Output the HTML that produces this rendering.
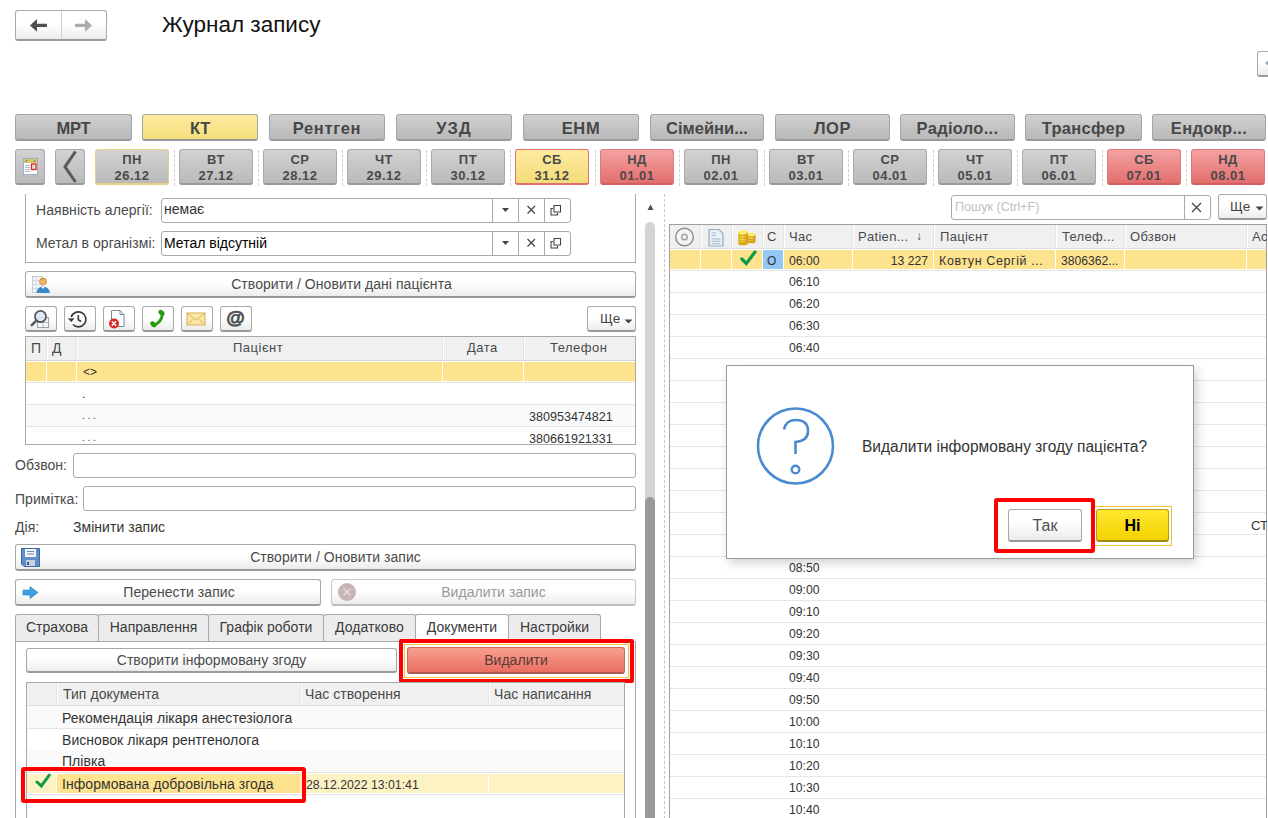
<!DOCTYPE html><html><head><meta charset="utf-8"><style>
*{box-sizing:border-box}
html,body{margin:0;padding:0;background:#fff;overflow:hidden}
body{width:1268px;height:818px;position:relative;font-family:"Liberation Sans",sans-serif;color:#333}
.f{font-size:14px;letter-spacing:0.05px;color:#4a4a4a}
.btn{position:absolute;border:1px solid #a9a9a9;border-bottom:2px solid #9a9a9a;border-radius:3px;background:linear-gradient(#fff,#fff 45%,#ececec);}
.cat{position:absolute;height:27px;top:114px;border:1px solid #a4a4a4;border-bottom:2px solid #999;border-radius:3px;background:linear-gradient(#d0d0d0,#b9b9b9);font-weight:bold;font-size:16.5px;color:#474747;text-align:center;line-height:26px;overflow:hidden;white-space:nowrap}
.day{position:absolute;top:149px;height:36px;border:1px solid #a9a9a9;border-bottom:2px solid #999;border-radius:3px;background:linear-gradient(#d2d2d2,#bababa);font-weight:bold;font-size:13px;letter-spacing:0.5px;color:#4a4a4a;text-align:center;line-height:16px;padding-top:1.5px;white-space:nowrap}
.sep{position:absolute;width:0;border-left:1px dashed #cfcfcf}
.inp{position:absolute;border:1px solid #a9a9a9;border-radius:3px;background:#fff}
.hdr{position:absolute;background:#f0f0f0;font-size:14px;letter-spacing:0.05px;color:#4a4a4a;line-height:22px;white-space:nowrap;overflow:hidden}
.rt{position:absolute;font-size:12px;color:#333;white-space:nowrap;line-height:22px}
</style></head><body>
<div class="btn" style="left:15px;top:10px;width:92px;height:31px;"></div>
<div style="position:absolute;left:61px;top:11px;width:1px;height:28px;background:#cfcfcf"></div>
<svg style="position:absolute;left:0;top:0" width="120" height="45"><path d="M30 25.4 L37 19 L37 23.8 L47 23.8 L47 27 L37 27 L37 31.8 Z" fill="#505050"/><path d="M92 25.4 L85 19 L85 23.8 L75 23.8 L75 27 L85 27 L85 31.8 Z" fill="#ababab"/></svg>
<div style="position:absolute;left:162px;top:12px;white-space:nowrap;font-size:22.5px;color:#111;line-height:26px">Журнал запису</div>
<div class="btn" style="left:1257px;top:51px;width:20px;height:26px;"></div>
<svg style="position:absolute;left:1265px;top:57px" width="8" height="12"><path d="M0 6 L6 1 L6 11 Z" fill="#9aaab8"/></svg>
<div class="cat" style="left:15px;width:117px;letter-spacing:-0.25px;">МРТ</div>
<div class="cat" style="left:142px;width:116px;letter-spacing:-0.4px;background:linear-gradient(#fdeb9f,#f5df7d);">КТ</div>
<div class="cat" style="left:269px;width:116px;letter-spacing:0.65px;">Рентген</div>
<div class="cat" style="left:396px;width:116px;letter-spacing:1.0px;">УЗД</div>
<div class="cat" style="left:523px;width:116px;letter-spacing:0.6px;">ЕНМ</div>
<div class="cat" style="left:650px;width:114px;letter-spacing:0px;">Сімейни...</div>
<div class="cat" style="left:775px;width:115px;letter-spacing:0.5px;">ЛОР</div>
<div class="cat" style="left:900px;width:115px;letter-spacing:0.3px;">Радіоло...</div>
<div class="cat" style="left:1025px;width:117px;letter-spacing:0.3px;">Трансфер</div>
<div class="cat" style="left:1152px;width:114px;letter-spacing:0.3px;">Ендокр...</div>
<div class="day" style="left:15px;width:30px;"></div>
<svg style="position:absolute;left:23px;top:158px" width="16" height="18"><rect x="0.5" y="0.5" width="14" height="16" fill="#fff" stroke="#a4acc4"/><rect x="1" y="1" width="13" height="4" fill="#d6c672"/><rect x="2.5" y="2" width="2" height="2" fill="#a09850"/><rect x="10.5" y="2" width="2" height="2" fill="#a09850"/><rect x="2" y="7" width="5" height="1" fill="#b0b8c8"/><rect x="2" y="9" width="5" height="1" fill="#b0b8c8"/><rect x="2" y="11" width="5" height="1" fill="#b0b8c8"/><rect x="2" y="13" width="5" height="1" fill="#b0b8c8"/><rect x="8.5" y="6" width="4.5" height="5.5" fill="#d9f0d0" stroke="#e02020" stroke-width="1.3"/></svg>
<div class="day" style="left:55px;width:30px;"></div>
<svg style="position:absolute;left:55px;top:149px" width="30" height="36"><path d="M20.5 2.5 L10 17.8 L20.5 33" fill="none" stroke="#5a5a5a" stroke-width="3"/></svg>
<div class="day" style="left:95px;width:74px;border-color:#e8d080;">ПН<br>26.12</div>
<div class="sep" style="left:174px;top:150px;height:36px"></div>
<div class="day" style="left:179px;width:74px;">ВТ<br>27.12</div>
<div class="sep" style="left:258px;top:150px;height:36px"></div>
<div class="day" style="left:263px;width:74px;">СР<br>28.12</div>
<div class="sep" style="left:342px;top:150px;height:36px"></div>
<div class="day" style="left:347px;width:74px;">ЧТ<br>29.12</div>
<div class="sep" style="left:426px;top:150px;height:36px"></div>
<div class="day" style="left:431px;width:74px;">ПТ<br>30.12</div>
<div class="sep" style="left:510px;top:150px;height:36px"></div>
<div class="day" style="left:515px;width:74px;background:linear-gradient(#fdeb9f,#f3dc78);border-color:#e07070;">СБ<br>31.12</div>
<div class="sep" style="left:595px;top:150px;height:36px"></div>
<div class="day" style="left:600px;width:74px;background:linear-gradient(#f4a2a2,#e46e6e);border-color:#e07878;border-bottom-color:#d06060;">НД<br>01.01</div>
<div class="sep" style="left:679px;top:150px;height:36px"></div>
<div class="day" style="left:684px;width:74px;">ПН<br>02.01</div>
<div class="sep" style="left:764px;top:150px;height:36px"></div>
<div class="day" style="left:769px;width:74px;">ВТ<br>03.01</div>
<div class="sep" style="left:848px;top:150px;height:36px"></div>
<div class="day" style="left:853px;width:74px;">СР<br>04.01</div>
<div class="sep" style="left:933px;top:150px;height:36px"></div>
<div class="day" style="left:938px;width:74px;">ЧТ<br>05.01</div>
<div class="sep" style="left:1017px;top:150px;height:36px"></div>
<div class="day" style="left:1022px;width:74px;">ПТ<br>06.01</div>
<div class="sep" style="left:1102px;top:150px;height:36px"></div>
<div class="day" style="left:1107px;width:74px;background:linear-gradient(#f4a2a2,#e46e6e);border-color:#e07878;border-bottom-color:#d06060;">СБ<br>07.01</div>
<div class="sep" style="left:1186px;top:150px;height:36px"></div>
<div class="day" style="left:1191px;width:74px;background:linear-gradient(#f4a2a2,#e46e6e);border-color:#e07878;border-bottom-color:#d06060;">НД<br>08.01</div>
<div style="position:absolute;left:25px;top:194px;width:611px;height:69px;border-left:1px solid #a9a9a9;border-right:1px solid #a9a9a9;border-bottom:1px solid #a9a9a9"></div>
<div style="position:absolute;left:36px;top:202px;white-space:nowrap;font-size:14px;letter-spacing:0.05px;color:#4a4a4a;line-height:16px;">Наявність алергії:</div>
<div style="position:absolute;left:36px;top:235px;white-space:nowrap;font-size:14px;letter-spacing:0.05px;color:#4a4a4a;line-height:16px">Метал в організмі:</div>
<div class="inp" style="left:161px;top:198px;width:410px;height:25px"></div>
<div style="position:absolute;left:492px;top:198px;width:1px;height:25px;background:#a9a9a9"></div>
<div style="position:absolute;left:518px;top:198px;width:1px;height:25px;background:#a9a9a9"></div>
<div style="position:absolute;left:544px;top:198px;width:1px;height:25px;background:#a9a9a9"></div>
<div style="position:absolute;left:164px;top:201px;white-space:nowrap;font-size:14px;letter-spacing:0px;color:#333;line-height:16px">немає</div>
<svg style="position:absolute;left:492px;top:198px" width="80" height="24"><path d="M10 10 L17 10 L13.5 14 Z" fill="#444"/><path d="M35.5 8 L43 15.5 M43 8 L35.5 15.5" stroke="#444" stroke-width="1.2"/><path d="M61 10.5 L59 10.5 L59 17 L65.5 17 L65.5 15 M62 7.5 L68.5 7.5 L68.5 14 L62 14 Z" fill="none" stroke="#444" stroke-width="1.1"/></svg>
<div class="inp" style="left:161px;top:231px;width:410px;height:25px"></div>
<div style="position:absolute;left:492px;top:231px;width:1px;height:25px;background:#a9a9a9"></div>
<div style="position:absolute;left:518px;top:231px;width:1px;height:25px;background:#a9a9a9"></div>
<div style="position:absolute;left:544px;top:231px;width:1px;height:25px;background:#a9a9a9"></div>
<div style="position:absolute;left:164px;top:235px;white-space:nowrap;font-size:14px;letter-spacing:0px;color:#000;line-height:16px">Метал відсутній</div>
<svg style="position:absolute;left:492px;top:231px" width="80" height="24"><path d="M10 10 L17 10 L13.5 14 Z" fill="#444"/><path d="M35.5 8 L43 15.5 M43 8 L35.5 15.5" stroke="#444" stroke-width="1.2"/><path d="M61 10.5 L59 10.5 L59 17 L65.5 17 L65.5 15 M62 7.5 L68.5 7.5 L68.5 14 L62 14 Z" fill="none" stroke="#444" stroke-width="1.1"/></svg>
<div class="btn" style="left:25px;top:271px;width:611px;height:27px"></div>
<div style="position:absolute;left:25px;top:276px;white-space:nowrap;font-size:14px;letter-spacing:0.05px;color:#4a4a4a;line-height:16px"><div style="width:611px;text-align:center;padding-left:22px">Створити / Оновити дані пацієнта</div></div>
<svg style="position:absolute;left:32px;top:276px" width="19" height="18"><rect x="0.5" y="0.5" width="10" height="16" fill="#f2f5f8" stroke="#b8c0cc" stroke-width="0.8"/><path d="M0.5 4.5 H10.5 M0.5 8.5 H10.5 M0.5 12.5 H10.5 M4 0.5 V16.5" stroke="#c8d0da" stroke-width="0.7"/><circle cx="11" cy="5.5" r="3.8" fill="#d88a3a"/><circle cx="11" cy="5.8" r="2.9" fill="#f0b068"/><path d="M4.5 17 Q5 10.5 11 10.5 Q17 10.5 18 17 Z" fill="#3a88c4"/><path d="M9 10.8 L11 13 L13 10.8 Z" fill="#fff"/></svg>
<div class="btn" style="left:25px;top:306px;width:32px;height:26px"></div>
<div class="btn" style="left:64px;top:306px;width:32px;height:26px"></div>
<div class="btn" style="left:103px;top:306px;width:32px;height:26px"></div>
<div class="btn" style="left:142px;top:306px;width:32px;height:26px"></div>
<div class="btn" style="left:181px;top:306px;width:32px;height:26px"></div>
<div class="btn" style="left:220px;top:306px;width:32px;height:26px"></div>
<svg style="position:absolute;left:0;top:0" width="300" height="340">
<g transform="translate(25,306)"><rect x="12.5" y="11.5" width="11" height="10" fill="#f6f8fa" stroke="#8a9aaa" stroke-width="0.9"/><path d="M18 12 V21 M13 16.5 H23" stroke="#9aaabb" stroke-width="0.8"/><circle cx="15.5" cy="10.5" r="5.6" fill="#dce8f6" fill-opacity="0.85" stroke="#555" stroke-width="1.7"/><path d="M11.3 14.7 L6 19.8" stroke="#555" stroke-width="2.4"/></g>
<g transform="translate(63,306)"><path d="M8.3 11 A7.5 7.5 0 1 1 10 18.5" fill="none" stroke="#3a3a3a" stroke-width="1.7"/><path d="M4.8 12.5 L8.3 16 L11.6 12.2 Z" fill="#3a3a3a"/><path d="M15.3 9 V13.8 L18 15.5" fill="none" stroke="#3a3a3a" stroke-width="1.6"/></g>
<g transform="translate(102,306)"><path d="M9.5 4.5 H18 L22 8.5 V20.5 H9.5 Z" fill="#fff" stroke="#6a7a8a" stroke-width="0.9"/><path d="M18 4.5 V8.5 H22" fill="none" stroke="#6a7a8a" stroke-width="0.9"/><circle cx="12" cy="17.5" r="5" fill="#dc2828"/><path d="M9.8 15.3 L14.2 19.7 M14.2 15.3 L9.8 19.7" stroke="#fff" stroke-width="1.4"/></g>
<g transform="translate(141,306)"><path d="M21.3 9 Q20.5 15.5 13.5 19.3" fill="none" stroke="#2a9a12" stroke-width="2.8"/><ellipse cx="20.5" cy="6.8" rx="3.4" ry="2.4" transform="rotate(40 20.5 6.8)" fill="#2a9a12"/><ellipse cx="12.3" cy="18.3" rx="3.4" ry="2.4" transform="rotate(40 12.3 18.3)" fill="#2a9a12"/></g>
<g transform="translate(180,306)"><rect x="7" y="7" width="18" height="12" fill="#fbe7a8" stroke="#d4b050" stroke-width="1"/><path d="M7 7 L16 14 L25 7 M7 19 L13 13.5 M25 19 L19 13.5" fill="none" stroke="#d4b050" stroke-width="0.9"/></g>
<g transform="translate(219,306)"><text x="16.5" y="17.8" text-anchor="middle" font-family="Liberation Sans" font-weight="bold" font-size="19" fill="#505050" stroke="#505050" stroke-width="0.7">@</text></g>
</svg>
<div class="btn" style="left:587px;top:306px;width:49px;height:26px"></div>
<div style="position:absolute;left:600px;top:311px;white-space:nowrap;font-size:13.5px;color:#444;line-height:16px">Ще</div>
<svg style="position:absolute;left:623.5px;top:318.5px" width="10" height="6"><path d="M0.5 0.5 L8.5 0.5 L4.5 4.5 Z" fill="#444"/></svg>
<div style="position:absolute;left:25px;top:336px;width:611px;height:109px;border:1px solid #a9a9a9;background:#fff"></div>
<div style="position:absolute;left:26px;top:337px;width:609px;height:24px;background:#f0f0f0;border-bottom:1px solid #d4d4d4"></div>
<div style="position:absolute;left:46px;top:337px;width:2px;height:23px;background:#fff;border-left:1px solid #e4e4e4"></div>
<div style="position:absolute;left:76px;top:337px;width:2px;height:23px;background:#fff;border-left:1px solid #e4e4e4"></div>
<div style="position:absolute;left:442px;top:337px;width:2px;height:23px;background:#fff;border-left:1px solid #e4e4e4"></div>
<div style="position:absolute;left:523px;top:337px;width:2px;height:23px;background:#fff;border-left:1px solid #e4e4e4"></div>
<div style="position:absolute;left:31px;top:340px;white-space:nowrap;font-size:14px;color:#4a4a4a;line-height:16px">П</div>
<div style="position:absolute;left:52px;top:340px;white-space:nowrap;font-size:14px;color:#4a4a4a;line-height:16px">Д</div>
<div style="position:absolute;left:233px;top:340px;white-space:nowrap;font-size:13px;color:#4a4a4a;line-height:16px;letter-spacing:0.5px">Пацієнт</div>
<div style="position:absolute;left:467px;top:340px;white-space:nowrap;font-size:13px;color:#4a4a4a;line-height:16px;letter-spacing:0.5px">Дата</div>
<div style="position:absolute;left:550px;top:340px;white-space:nowrap;font-size:13px;color:#4a4a4a;line-height:16px;letter-spacing:0.5px">Телефон</div>
<div style="position:absolute;left:26px;top:362px;width:609px;height:19px;background:#fde38e"></div>
<div style="position:absolute;left:46px;top:362px;width:1px;height:19px;background:#fff"></div>
<div style="position:absolute;left:76px;top:362px;width:1px;height:19px;background:#fff"></div>
<div style="position:absolute;left:442px;top:362px;width:1px;height:19px;background:#fff"></div>
<div style="position:absolute;left:523px;top:362px;width:1px;height:19px;background:#fff"></div>
<div style="position:absolute;left:83px;top:364px;white-space:nowrap;font-size:12px;color:#333;line-height:16px">&lt;&gt;</div>
<div style="position:absolute;left:26px;top:382px;width:609px;height:1px;background:#e4e4e4"></div>
<div style="position:absolute;left:26px;top:405px;width:609px;height:21px;background:#fafafa"></div>
<div style="position:absolute;left:26px;top:404px;width:609px;height:1px;background:#e4e4e4"></div>
<div style="position:absolute;left:26px;top:426px;width:609px;height:1px;background:#e4e4e4"></div>
<div style="position:absolute;left:82px;top:386px;white-space:nowrap;font-size:12px;color:#333;line-height:16px">.</div>
<div style="position:absolute;left:82px;top:408px;white-space:nowrap;font-size:10px;color:#333;line-height:16px">. . .</div>
<div style="position:absolute;left:82px;top:430px;white-space:nowrap;font-size:10px;color:#333;line-height:16px">. . .</div>
<div style="position:absolute;left:529px;top:408.5px;white-space:nowrap;font-size:13.5px;color:#333;line-height:16px;transform:scaleX(0.93);transform-origin:0 0">380953474821</div>
<div style="position:absolute;left:529px;top:430.5px;white-space:nowrap;font-size:13.5px;color:#333;line-height:16px;transform:scaleX(0.93);transform-origin:0 0">380661921331</div>
<div style="position:absolute;left:15px;top:457px;white-space:nowrap;font-size:14px;letter-spacing:0.05px;color:#4a4a4a;line-height:16px">Обзвон:</div>
<div class="inp" style="left:73px;top:453px;width:563px;height:25px"></div>
<div style="position:absolute;left:15px;top:491px;white-space:nowrap;font-size:14px;letter-spacing:0.05px;color:#4a4a4a;line-height:16px">Примітка:</div>
<div class="inp" style="left:83px;top:486px;width:553px;height:25px"></div>
<div style="position:absolute;left:15px;top:519px;white-space:nowrap;font-size:14px;letter-spacing:0.05px;color:#4a4a4a;line-height:16px">Дія:</div>
<div style="position:absolute;left:73px;top:519px;white-space:nowrap;font-size:14px;letter-spacing:0.05px;color:#333;line-height:16px">Змінити запис</div>
<div class="btn" style="left:15px;top:544px;width:621px;height:27px"></div>
<div style="position:absolute;left:15px;top:549px;white-space:nowrap;font-size:14px;letter-spacing:0.05px;color:#4a4a4a;line-height:16px"><div style="width:621px;text-align:center;padding-left:20px">Створити / Оновити запис</div></div>
<svg style="position:absolute;left:21px;top:548px" width="20" height="19"><path d="M0.5 0.5 H18.5 V18.5 H3 L0.5 16 Z" fill="#5f8ec8" stroke="#3a6aa8"/><rect x="4" y="1" width="11" height="8" fill="#f4f6f8"/><path d="M6 3.5 H13 M6 6 H13" stroke="#6a8ab0"/><rect x="5" y="12" width="9" height="6" fill="#c8d4e0"/><rect x="6" y="14" width="2" height="3" fill="#3a5a88"/></svg>
<div class="btn" style="left:15px;top:579px;width:306px;height:27px"></div>
<div style="position:absolute;left:15px;top:584px;white-space:nowrap;font-size:14px;letter-spacing:0.05px;color:#4a4a4a;line-height:16px"><div style="width:306px;text-align:center;padding-left:22px">Перенести запис</div></div>
<svg style="position:absolute;left:22px;top:586px" width="18" height="14"><path d="M1 4 H8 V0.5 L16 6.5 L8 12.5 V9 H1 Z" fill="#3aa0e0" stroke="#2a80c0" stroke-width="0.6"/></svg>
<div class="btn" style="left:331px;top:579px;width:305px;height:27px;border-color:#c8c8c8;border-bottom-color:#bdbdbd"></div>
<div style="position:absolute;left:331px;top:584px;white-space:nowrap;font-size:14px;letter-spacing:0.05px;color:#999;line-height:16px"><div style="width:305px;text-align:center;padding-left:20px">Видалити запис</div></div>
<svg style="position:absolute;left:337px;top:582px" width="20" height="20"><circle cx="10" cy="10" r="9" fill="#c7b5b5"/><path d="M6.5 6.5 L13.5 13.5 M13.5 6.5 L6.5 13.5" stroke="#e8dede" stroke-width="1.3"/></svg>
<div style="position:absolute;left:15px;top:641px;width:621px;height:200px;border-left:1px solid #a9a9a9;border-right:1px solid #a9a9a9;border-top:1px solid #a9a9a9"></div>
<div style="position:absolute;left:15px;top:614px;width:84px;height:27px;background:#ececec;border:1px solid #a9a9a9;border-radius:3px 3px 0 0;border-bottom:none;font-size:14px;letter-spacing:0.05px;color:#3a3a3a;text-align:center;line-height:25px;white-space:nowrap">Страхова</div>
<div style="position:absolute;left:98px;top:614px;width:111px;height:27px;background:#ececec;border:1px solid #a9a9a9;border-radius:3px 3px 0 0;border-bottom:none;font-size:14px;letter-spacing:0.05px;color:#3a3a3a;text-align:center;line-height:25px;white-space:nowrap">Направлення</div>
<div style="position:absolute;left:208px;top:614px;width:116px;height:27px;background:#ececec;border:1px solid #a9a9a9;border-radius:3px 3px 0 0;border-bottom:none;font-size:14px;letter-spacing:0.05px;color:#3a3a3a;text-align:center;line-height:25px;white-space:nowrap">Графік роботи</div>
<div style="position:absolute;left:323px;top:614px;width:93px;height:27px;background:#ececec;border:1px solid #a9a9a9;border-radius:3px 3px 0 0;border-bottom:none;font-size:14px;letter-spacing:0.05px;color:#3a3a3a;text-align:center;line-height:25px;white-space:nowrap">Додатково</div>
<div style="position:absolute;left:415px;top:614px;width:94px;height:28px;background:#fff;border:1px solid #a9a9a9;border-radius:3px 3px 0 0;border-bottom:1px solid #fff;border-bottom:none;font-size:14px;letter-spacing:0.05px;color:#3a3a3a;text-align:center;line-height:25px;white-space:nowrap">Документи</div>
<div style="position:absolute;left:508px;top:614px;width:93px;height:27px;background:#ececec;border:1px solid #a9a9a9;border-radius:3px 3px 0 0;border-bottom:none;font-size:14px;letter-spacing:0.05px;color:#3a3a3a;text-align:center;line-height:25px;white-space:nowrap">Настройки</div>
<div class="btn" style="left:26px;top:648px;width:371px;height:25px"></div>
<div style="position:absolute;left:26px;top:652px;white-space:nowrap;font-size:14px;letter-spacing:0.05px;color:#4a4a4a;line-height:16px"><div style="width:371px;text-align:center">Створити інформовану згоду</div></div>
<div style="position:absolute;left:404px;top:644px;width:225px;height:34px;border:1px solid #f4c430"></div>
<div style="position:absolute;left:407px;top:647px;width:218px;height:27px;border:1px solid #c86a60;border-bottom:2px solid #a85a50;border-radius:3px;background:linear-gradient(#f8a090,#ea6e62);font-size:14px;letter-spacing:0.05px;color:#5a3a38;text-align:center;line-height:24px">Видалити</div>
<div style="position:absolute;left:399px;top:639px;width:235px;height:44px;border:4px solid #f00;border-radius:2px"></div>
<div style="position:absolute;left:26px;top:682px;width:599px;height:140px;border:1px solid #a9a9a9;background:#fff"></div>
<div style="position:absolute;left:27px;top:683px;width:597px;height:22px;background:#f0f0f0"></div>
<div style="position:absolute;left:27px;top:705px;width:597px;height:1px;background:#e0e0e0"></div>
<div style="position:absolute;left:56px;top:683px;width:2px;height:22px;background:#fff;border-left:1px solid #e4e4e4"></div>
<div style="position:absolute;left:300px;top:683px;width:2px;height:22px;background:#fff;border-left:1px solid #e4e4e4"></div>
<div style="position:absolute;left:488px;top:683px;width:2px;height:22px;background:#fff;border-left:1px solid #e4e4e4"></div>
<div style="position:absolute;left:63px;top:686px;white-space:nowrap;font-size:14px;letter-spacing:0.05px;color:#4a4a4a;line-height:16px">Тип документа</div>
<div style="position:absolute;left:305px;top:686px;white-space:nowrap;font-size:14px;letter-spacing:0.05px;color:#4a4a4a;line-height:16px">Час створення</div>
<div style="position:absolute;left:494px;top:686px;white-space:nowrap;font-size:14px;letter-spacing:0.05px;color:#4a4a4a;line-height:16px">Час написання</div>
<div style="position:absolute;left:27px;top:706px;width:597px;height:22px;background:#fafafa"></div>
<div style="position:absolute;left:27px;top:728px;width:597px;height:1px;background:#e4e4e4"></div>
<div style="position:absolute;left:62px;top:710px;white-space:nowrap;font-size:14px;letter-spacing:0.05px;color:#333;line-height:16px">Рекомендація лікаря анестезіолога</div>
<div style="position:absolute;left:27px;top:750px;width:597px;height:1px;background:#e4e4e4"></div>
<div style="position:absolute;left:62px;top:732px;white-space:nowrap;font-size:14px;letter-spacing:0.05px;color:#333;line-height:16px">Висновок лікаря рентгенолога</div>
<div style="position:absolute;left:27px;top:750px;width:597px;height:22px;background:#fafafa"></div>
<div style="position:absolute;left:27px;top:772px;width:597px;height:1px;background:#e4e4e4"></div>
<div style="position:absolute;left:62px;top:753px;white-space:nowrap;font-size:14px;letter-spacing:0.05px;color:#333;line-height:16px">Плівка</div>
<div style="position:absolute;left:27px;top:774px;width:597px;height:19px;background:#fdf2c4"></div>
<div style="position:absolute;left:57px;top:774px;width:243px;height:19px;background:#fde38e"></div>
<div style="position:absolute;left:56px;top:774px;width:1px;height:19px;background:#fff"></div>
<div style="position:absolute;left:27px;top:794px;width:597px;height:1px;background:#e4e4e4"></div>
<div style="position:absolute;left:488px;top:773px;width:1px;height:21px;background:#fff"></div>
<div style="position:absolute;left:62px;top:776px;white-space:nowrap;font-size:14px;letter-spacing:0.05px;color:#333;line-height:16px">Інформована добровільна згода</div>
<div style="position:absolute;left:306px;top:776.5px;white-space:nowrap;font-size:13.5px;color:#333;line-height:16px;transform:scaleX(0.91);transform-origin:0 0">28.12.2022 13:01:41</div>
<svg style="position:absolute;left:35px;top:773px" width="18" height="17"><path d="M2 9 L6.3 13 L14.3 2.2" fill="none" stroke="#12994a" stroke-width="3" stroke-linecap="round"/></svg>
<div style="position:absolute;left:21px;top:767px;width:285px;height:36px;border:4px solid #f00;border-radius:3px"></div>
<svg style="position:absolute;left:647px;top:204px" width="8" height="7"><path d="M0.5 6 L3.5 0.5 L6.5 6 Z" fill="#505050"/></svg>
<div style="position:absolute;left:645px;top:222px;width:10px;height:600px;background:#d4d4d4;border-radius:5px 5px 0 0"></div>
<div style="position:absolute;left:645px;top:497px;width:10px;height:330px;background:#9a9a9a;border-radius:5px 5px 0 0"></div>
<div class="sep" style="left:664px;top:194px;height:630px;border-left-color:#c8c8c8"></div>
<div class="inp" style="left:951px;top:195px;width:260px;height:25px"></div>
<div style="position:absolute;left:1184px;top:196px;width:1px;height:23px;background:#a9a9a9"></div>
<div style="position:absolute;left:955px;top:199px;white-space:nowrap;font-size:12.6px;color:#c0c0c0;line-height:16px">Пошук (Ctrl+F)</div>
<svg style="position:absolute;left:1190px;top:201px" width="14" height="14"><path d="M2 2 L11 11 M11 2 L2 11" stroke="#444" stroke-width="1.3"/></svg>
<div class="btn" style="left:1218px;top:194px;width:49px;height:26px"></div>
<div style="position:absolute;left:1230px;top:199px;white-space:nowrap;font-size:13.5px;color:#444;line-height:16px">Ще</div>
<svg style="position:absolute;left:1254.5px;top:205.5px" width="10" height="6"><path d="M0.5 0.5 L8.5 0.5 L4.5 4.5 Z" fill="#444"/></svg>
<div style="position:absolute;left:669px;top:224px;width:598px;height:600px;border-left:1px solid #a0a0a0;border-top:1px solid #a0a0a0;border-right:1px solid #a0a0a0"></div>
<div style="position:absolute;left:670px;top:225px;width:596px;height:23px;background:#f0f0f0"></div>
<div style="position:absolute;left:700px;top:225px;width:2px;height:23px;background:#fff;border-left:1px solid #e4e4e4"></div>
<div style="position:absolute;left:731px;top:225px;width:2px;height:23px;background:#fff;border-left:1px solid #e4e4e4"></div>
<div style="position:absolute;left:762px;top:225px;width:2px;height:23px;background:#fff;border-left:1px solid #e4e4e4"></div>
<div style="position:absolute;left:783px;top:225px;width:2px;height:23px;background:#fff;border-left:1px solid #e4e4e4"></div>
<div style="position:absolute;left:852px;top:225px;width:2px;height:23px;background:#fff;border-left:1px solid #e4e4e4"></div>
<div style="position:absolute;left:933px;top:225px;width:2px;height:23px;background:#fff;border-left:1px solid #e4e4e4"></div>
<div style="position:absolute;left:1055px;top:225px;width:2px;height:23px;background:#fff;border-left:1px solid #e4e4e4"></div>
<div style="position:absolute;left:1124px;top:225px;width:2px;height:23px;background:#fff;border-left:1px solid #e4e4e4"></div>
<div style="position:absolute;left:1246px;top:225px;width:2px;height:23px;background:#fff;border-left:1px solid #e4e4e4"></div>
<div style="position:absolute;left:670px;top:248px;width:596px;height:1px;background:#e0e0e0"></div>
<svg style="position:absolute;left:670px;top:225px" width="100" height="23">
<circle cx="14.5" cy="12" r="8.8" fill="#f4f4f4" stroke="#8c8c8c" stroke-width="1.4"/><circle cx="14.5" cy="12" r="2.8" fill="none" stroke="#a0a0a0" stroke-width="1.4"/>
<path d="M39 4.5 H49 L53 8.5 V21 H39 Z" fill="#e8f0f8" stroke="#9aaabb" stroke-width="1.2"/><path d="M41.5 8 H46 M41.5 10.5 H46 M41.5 14 H50.5 M41.5 16.3 H50.5 M41.5 18.6 H50.5" stroke="#a8b8c8" stroke-width="1"/>
<defs><linearGradient id="gc" x1="0" x2="1"><stop offset="0" stop-color="#e8b820"/><stop offset="0.45" stop-color="#fde050"/><stop offset="1" stop-color="#d09a18"/></linearGradient></defs>
<rect x="77.3" y="9.3" width="8.2" height="7.6" fill="url(#gc)"/><ellipse cx="81.4" cy="16.9" rx="4.1" ry="1.4" fill="#d8a418"/><ellipse cx="81.4" cy="9.3" rx="4.1" ry="1.8" fill="#fcec70"/><path d="M77.5 12.2 H85.3 M77.5 14.6 H85.3" stroke="#c8901a" stroke-width="0.8"/>
<rect x="68.3" y="7" width="9.5" height="11.8" fill="url(#gc)"/><ellipse cx="73" cy="18.8" rx="4.75" ry="1.5" fill="#d8a418"/><ellipse cx="73" cy="7" rx="4.75" ry="2" fill="#fcec70"/><path d="M68.5 10.6 H77.6 M68.5 13.2 H77.6 M68.5 16 H77.6" stroke="#c8901a" stroke-width="0.8"/>
</svg>
<div style="position:absolute;left:767px;top:229px;white-space:nowrap;font-size:13px;letter-spacing:0.3px;color:#4a4a4a;line-height:16px">С</div>
<div style="position:absolute;left:789px;top:229px;white-space:nowrap;font-size:13px;letter-spacing:0.3px;color:#4a4a4a;line-height:16px">Час</div>
<div style="position:absolute;left:858px;top:229px;white-space:nowrap;font-size:13px;letter-spacing:0.3px;color:#4a4a4a;line-height:16px">Patien...</div>
<div style="position:absolute;left:940px;top:229px;white-space:nowrap;font-size:13px;letter-spacing:0.3px;color:#4a4a4a;line-height:16px">Пацієнт</div>
<div style="position:absolute;left:1062px;top:229px;white-space:nowrap;font-size:13px;letter-spacing:0.3px;color:#4a4a4a;line-height:16px">Телеф...</div>
<div style="position:absolute;left:1130px;top:229px;white-space:nowrap;font-size:13px;letter-spacing:0.3px;color:#4a4a4a;line-height:16px">Обзвон</div>
<div style="position:absolute;left:1252px;top:229px;white-space:nowrap;font-size:13px;letter-spacing:0.3px;color:#4a4a4a;line-height:16px">Ас</div>
<div style="position:absolute;left:916px;top:228px;white-space:nowrap;font-size:12px;color:#444;line-height:16px">↓</div>
<div style="position:absolute;left:670px;top:270px;width:596px;height:1px;background:#e6e6e6"></div>
<div style="position:absolute;left:670px;top:292px;width:596px;height:1px;background:#e6e6e6"></div>
<div style="position:absolute;left:670px;top:314px;width:596px;height:1px;background:#e6e6e6"></div>
<div style="position:absolute;left:670px;top:336px;width:596px;height:1px;background:#e6e6e6"></div>
<div style="position:absolute;left:670px;top:358px;width:596px;height:1px;background:#e6e6e6"></div>
<div style="position:absolute;left:670px;top:380px;width:596px;height:1px;background:#e6e6e6"></div>
<div style="position:absolute;left:670px;top:402px;width:596px;height:1px;background:#e6e6e6"></div>
<div style="position:absolute;left:670px;top:424px;width:596px;height:1px;background:#e6e6e6"></div>
<div style="position:absolute;left:670px;top:446px;width:596px;height:1px;background:#e6e6e6"></div>
<div style="position:absolute;left:670px;top:468px;width:596px;height:1px;background:#e6e6e6"></div>
<div style="position:absolute;left:670px;top:490px;width:596px;height:1px;background:#e6e6e6"></div>
<div style="position:absolute;left:670px;top:512px;width:596px;height:1px;background:#e6e6e6"></div>
<div style="position:absolute;left:670px;top:534px;width:596px;height:1px;background:#e6e6e6"></div>
<div style="position:absolute;left:670px;top:556px;width:596px;height:1px;background:#e6e6e6"></div>
<div style="position:absolute;left:670px;top:578px;width:596px;height:1px;background:#e6e6e6"></div>
<div style="position:absolute;left:670px;top:600px;width:596px;height:1px;background:#e6e6e6"></div>
<div style="position:absolute;left:670px;top:622px;width:596px;height:1px;background:#e6e6e6"></div>
<div style="position:absolute;left:670px;top:644px;width:596px;height:1px;background:#e6e6e6"></div>
<div style="position:absolute;left:670px;top:666px;width:596px;height:1px;background:#e6e6e6"></div>
<div style="position:absolute;left:670px;top:688px;width:596px;height:1px;background:#e6e6e6"></div>
<div style="position:absolute;left:670px;top:710px;width:596px;height:1px;background:#e6e6e6"></div>
<div style="position:absolute;left:670px;top:732px;width:596px;height:1px;background:#e6e6e6"></div>
<div style="position:absolute;left:670px;top:754px;width:596px;height:1px;background:#e6e6e6"></div>
<div style="position:absolute;left:670px;top:776px;width:596px;height:1px;background:#e6e6e6"></div>
<div style="position:absolute;left:670px;top:798px;width:596px;height:1px;background:#e6e6e6"></div>
<div style="position:absolute;left:670px;top:820px;width:596px;height:1px;background:#e6e6e6"></div>
<div style="position:absolute;left:670px;top:250px;width:596px;height:19px;background:#fde38e"></div>
<div style="position:absolute;left:700px;top:250px;width:1px;height:19px;background:#fff"></div>
<div style="position:absolute;left:731px;top:250px;width:1px;height:19px;background:#fff"></div>
<div style="position:absolute;left:762px;top:250px;width:1px;height:19px;background:#fff"></div>
<div style="position:absolute;left:783px;top:250px;width:1px;height:19px;background:#fff"></div>
<div style="position:absolute;left:852px;top:250px;width:1px;height:19px;background:#fff"></div>
<div style="position:absolute;left:933px;top:250px;width:1px;height:19px;background:#fff"></div>
<div style="position:absolute;left:1055px;top:250px;width:1px;height:19px;background:#fff"></div>
<div style="position:absolute;left:1124px;top:250px;width:1px;height:19px;background:#fff"></div>
<div style="position:absolute;left:1246px;top:250px;width:1px;height:19px;background:#fff"></div>
<div style="position:absolute;left:763px;top:250px;width:20px;height:19px;background:#94c6f6"></div>
<svg style="position:absolute;left:740px;top:250px" width="18" height="17"><path d="M1.8 9 L6.3 13.5 L15 2" fill="none" stroke="#12994a" stroke-width="3.2" stroke-linecap="round"/></svg>
<div style="position:absolute;left:767px;top:253px;white-space:nowrap;font-size:12px;color:#333;line-height:16px">O</div>
<div style="position:absolute;left:789px;top:253px;white-space:nowrap;font-size:13.5px;color:#333;line-height:16px;transform:scaleX(0.9);transform-origin:0 0">06:00</div>
<div style="position:absolute;left:828px;top:253px;white-space:nowrap;font-size:13.5px;color:#333;line-height:16px;transform:scaleX(0.9);transform-origin:100px 0"><div style="width:100px;text-align:right">13 227</div></div>
<div style="position:absolute;left:939px;top:253px;white-space:nowrap;font-size:12.5px;letter-spacing:0.6px;color:#333;line-height:16px">Ковтун Сергій ...</div>
<div style="position:absolute;left:1061px;top:253px;white-space:nowrap;font-size:13.5px;color:#333;line-height:16px;transform:scaleX(0.9);transform-origin:0 0">3806362...</div>
<div style="position:absolute;left:789px;top:274px;white-space:nowrap;font-size:13.5px;color:#333;line-height:16px;transform:scaleX(0.9);transform-origin:0 0">06:10</div>
<div style="position:absolute;left:789px;top:296px;white-space:nowrap;font-size:13.5px;color:#333;line-height:16px;transform:scaleX(0.9);transform-origin:0 0">06:20</div>
<div style="position:absolute;left:789px;top:318px;white-space:nowrap;font-size:13.5px;color:#333;line-height:16px;transform:scaleX(0.9);transform-origin:0 0">06:30</div>
<div style="position:absolute;left:789px;top:340px;white-space:nowrap;font-size:13.5px;color:#333;line-height:16px;transform:scaleX(0.9);transform-origin:0 0">06:40</div>
<div style="position:absolute;left:789px;top:560px;white-space:nowrap;font-size:13.5px;color:#333;line-height:16px;transform:scaleX(0.9);transform-origin:0 0">08:50</div>
<div style="position:absolute;left:789px;top:582px;white-space:nowrap;font-size:13.5px;color:#333;line-height:16px;transform:scaleX(0.9);transform-origin:0 0">09:00</div>
<div style="position:absolute;left:789px;top:604px;white-space:nowrap;font-size:13.5px;color:#333;line-height:16px;transform:scaleX(0.9);transform-origin:0 0">09:10</div>
<div style="position:absolute;left:789px;top:626px;white-space:nowrap;font-size:13.5px;color:#333;line-height:16px;transform:scaleX(0.9);transform-origin:0 0">09:20</div>
<div style="position:absolute;left:789px;top:648px;white-space:nowrap;font-size:13.5px;color:#333;line-height:16px;transform:scaleX(0.9);transform-origin:0 0">09:30</div>
<div style="position:absolute;left:789px;top:670px;white-space:nowrap;font-size:13.5px;color:#333;line-height:16px;transform:scaleX(0.9);transform-origin:0 0">09:40</div>
<div style="position:absolute;left:789px;top:692px;white-space:nowrap;font-size:13.5px;color:#333;line-height:16px;transform:scaleX(0.9);transform-origin:0 0">09:50</div>
<div style="position:absolute;left:789px;top:714px;white-space:nowrap;font-size:13.5px;color:#333;line-height:16px;transform:scaleX(0.9);transform-origin:0 0">10:00</div>
<div style="position:absolute;left:789px;top:736px;white-space:nowrap;font-size:13.5px;color:#333;line-height:16px;transform:scaleX(0.9);transform-origin:0 0">10:10</div>
<div style="position:absolute;left:789px;top:758px;white-space:nowrap;font-size:13.5px;color:#333;line-height:16px;transform:scaleX(0.9);transform-origin:0 0">10:20</div>
<div style="position:absolute;left:789px;top:780px;white-space:nowrap;font-size:13.5px;color:#333;line-height:16px;transform:scaleX(0.9);transform-origin:0 0">10:30</div>
<div style="position:absolute;left:789px;top:802px;white-space:nowrap;font-size:13.5px;color:#333;line-height:16px;transform:scaleX(0.9);transform-origin:0 0">10:40</div>
<div style="position:absolute;left:1251px;top:518px;white-space:nowrap;font-size:13px;color:#333;line-height:16px">СТ</div>
<div style="position:absolute;left:1267px;top:224px;width:10px;height:600px;background:#fff"></div>
<div style="position:absolute;left:726px;top:365px;width:468px;height:194px;background:#fff;border:1px solid #9a9a9a;box-shadow:3px 4px 10px rgba(0,0,0,0.18)"></div>
<svg style="position:absolute;left:750px;top:400px" width="90" height="92"><circle cx="45.5" cy="46" r="37.5" fill="none" stroke="#4a8ad0" stroke-width="2.6"/><path d="M34 29.5 Q36 20 45.5 20 Q58 20 58 31 Q58 41 45.5 42 V54" fill="none" stroke="#4a8ad0" stroke-width="2.6"/><circle cx="45.5" cy="69.5" r="3.8" fill="none" stroke="#4a8ad0" stroke-width="2.4"/></svg>
<div style="position:absolute;left:862px;top:438px;white-space:nowrap;font-size:16px;color:#333;line-height:18px;transform:scaleX(0.97);transform-origin:0 0">Видалити інформовану згоду пацієнта?</div>
<div style="position:absolute;left:1008px;top:509px;width:74px;height:33px;border:1px solid #a9a9a9;border-bottom:2px solid #999;border-radius:3px;background:linear-gradient(#fff,#fff 40%,#ebebeb);font-size:16px;color:#505050;text-align:center;line-height:32px">Так</div>
<div style="position:absolute;left:1094px;top:506px;width:78px;height:40px;border:1px solid #f4c430"></div>
<div style="position:absolute;left:1096px;top:509px;width:73px;height:33px;border:1px solid #b09a20;border-bottom:2px solid #a08a10;border-radius:3px;background:linear-gradient(#ffe830,#f2d200);font-size:16px;font-weight:bold;color:#000;text-align:center;line-height:32px">Ні</div>
<div style="position:absolute;left:994px;top:498px;width:101px;height:55px;border:4px solid #f00;border-radius:3px"></div>
</body></html>
